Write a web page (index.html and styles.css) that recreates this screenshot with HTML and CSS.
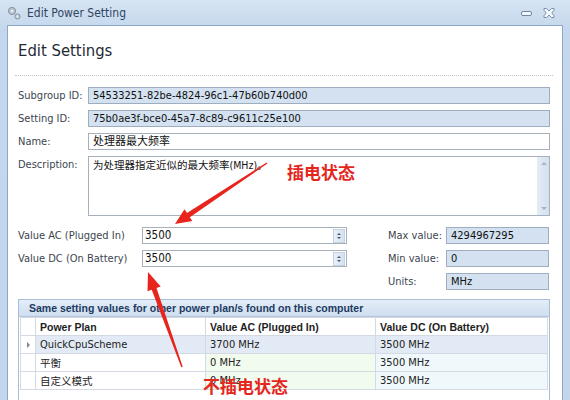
FILE: index.html
```html
<!DOCTYPE html>
<html>
<head>
<meta charset="utf-8">
<link rel="stylesheet" href="styles.css">
</head>
<body>
<div class="window">
  <div class="titlebar">
    <svg class="app-icon" width="14" height="14" viewBox="0 0 14 14">
      <circle cx="5" cy="5" r="3.6" fill="#b9c3cf" stroke="#8793a3" stroke-width="1"/>
      <circle cx="5" cy="5" r="1.3" fill="#eef2f6"/>
      <circle cx="10.5" cy="10.5" r="2.6" fill="#c3ccd7" stroke="#8793a3" stroke-width="1"/>
      <circle cx="10.5" cy="10.5" r="0.9" fill="#eef2f6"/>
    </svg>
    <span class="title">Edit Power Setting</span>
    <span class="spacer"></span>
    <svg class="tb-btn" width="14" height="10" viewBox="0 0 14 10">
      <rect x="1.5" y="3.5" width="10" height="4" rx="1.5" fill="#f4f7fb" stroke="#6f86a3"/>
    </svg>
    <svg class="tb-btn close" width="14" height="12" viewBox="0 0 14 12">
      <path d="M2 1.5h2.5L7 4l2.5-2.5H12v1.8L9.8 6 12 8.7v1.8H9.5L7 8l-2.5 2.5H2V8.7L4.2 6 2 3.3z" fill="#f4f7fb" stroke="#6f86a3" stroke-width="0.9"/>
    </svg>
  </div>
  <div class="panel">
    <h1 class="heading">Edit Settings</h1>
    <div class="divider"></div>

    <div class="fields">
      <label class="lbl">Subgroup ID:</label>
      <div class="box ro">54533251-82be-4824-96c1-47b60b740d00</div>
      <label class="lbl">Setting ID:</label>
      <div class="box ro">75b0ae3f-bce0-45a7-8c89-c9611c25e100</div>
      <label class="lbl">Name:</label>
      <div class="box">处理器最大频率</div>
      <label class="lbl top">Description:</label>
      <div class="box memo">
        <span class="memo-text">为处理器指定近似的最大频率(MHz)。</span>
        <div class="vscroll"><span class="sc-up"></span><span class="sc-down"></span></div>
      </div>
    </div>

    <div class="values">
      <label class="lbl llbl">Value AC (Plugged In)</label>
      <div class="box spin"><span>3500</span><span class="spinner"><i class="up"></i><i class="down"></i></span></div>
      <label class="lbl rlbl">Max value:</label>
      <div class="box ro">4294967295</div>

      <label class="lbl llbl">Value DC (On Battery)</label>
      <div class="box spin"><span>3500</span><span class="spinner"><i class="up"></i><i class="down"></i></span></div>
      <label class="lbl rlbl">Min value:</label>
      <div class="box ro">0</div>

      <label class="lbl rlbl">Units:</label>
      <div class="box ro">MHz</div>
    </div>

    <div class="group">
      <div class="group-head">Same setting values for other power plan/s found on this computer</div>
      <table class="grid">
        <colgroup><col class="c0"><col class="c1"><col class="c2"><col class="c3"></colgroup>
        <tr class="hdr"><th></th><th>Power Plan</th><th>Value AC (Plugged In)</th><th>Value DC (On Battery)</th></tr>
        <tr class="sel"><td class="rh"><span class="tri"></span></td><td>QuickCpuScheme</td><td>3700 MHz</td><td>3500 MHz</td></tr>
        <tr><td class="rh"></td><td class="cjk">平衡</td><td class="ac">0 MHz</td><td class="dc">3500 MHz</td></tr>
        <tr><td class="rh"></td><td class="cjk">自定义模式</td><td class="ac">0 MHz</td><td class="dc">3500 MHz</td></tr>
      </table>
    </div>
  </div>
</div>

<svg class="annot-arrows" width="570" height="400" viewBox="0 0 570 400">
  <polygon fill="#e8251d" points="267.4,163.5 189.8,217.2 192.3,220.9 175,224 184.5,209.3 187,213 266.6,162.5"/>
  <polygon fill="#e8251d" points="182.7,366.8 156.5,288.1 160.7,286.5 148,272 147.5,291.3 151.7,289.7 181.3,367.2"/>
</svg>
<div class="annot a1">插电状态</div>
<div class="annot a2">不插电状态</div>
</body>
</html>
```

FILE: styles.css
```css
* { box-sizing: border-box; }
html, body { margin: 0; padding: 0; }
body {
  width: 570px;
  height: 400px;
  overflow: hidden;
  background: #c6d9ee;
  font-family: "DejaVu Sans Condensed", "Liberation Sans", "Noto Sans CJK SC", sans-serif;
  font-size: 11px;
  color: #222;
  position: relative;
}
.window {
  height: 400px;
  display: flex;
  flex-direction: column;
  background: linear-gradient(#d6e4f3, #c4d7ed 30px, #c2d6ec);
}
.titlebar {
  height: 25px;
  display: flex;
  align-items: center;
  padding: 0 14px 0 7px;
  flex: none;
}
.app-icon { margin-right: 6px; margin-top: 1px; }
.title {
  font-size: 12px;
  color: #30455f;
}
.spacer { flex: 1; }
.tb-btn { margin-left: 9px; }
.tb-btn.close { margin-left: 8px; margin-right: 0; }

.panel {
  flex: 1;
  margin: 0 7px 0 7px;
  background: #fff;
  border: 1px solid #8ea7c5;
  border-bottom: none;
  padding: 0 12px 0 10px;
}
.heading {
  margin: 13px 0 0 0;
  font-size: 16.5px;
  line-height: 24px;
  font-weight: normal;
  color: #1f2a36;
  height: 24px;
}
.divider {
  margin: 12px -3px 0 -3px;
  border-top: 1px dotted #c4c4c4;
  height: 0;
}

.lbl {
  color: #3c4550;
  white-space: nowrap;
  align-self: center;
}
.lbl.top { align-self: start; padding-top: 2px; }

.box {
  height: 17px;
  border: 1px solid #a7b1bd;
  background: #fff;
  padding: 0 4px;
  line-height: 15px;
  color: #111;
  white-space: nowrap;
  overflow: hidden;
}
.box.ro {
  background: #d3e1f0;
  border-color: #9eaebf;
}

.fields {
  margin-top: 11px;
  display: grid;
  grid-template-columns: 70px 1fr;
  row-gap: 6px;
}
.box.memo {
  height: 60px;
  display: flex;
  padding: 0 0 0 4px;
  align-items: flex-start;
}
.memo-text { flex: 1; line-height: 16px; font-size: 10.5px; }
.vscroll {
  width: 12px;
  height: 100%;
  background: linear-gradient(90deg, #e4ecf6, #d3e0ee);
  border-left: 1px solid #e5ebf2;
  display: flex;
  flex-direction: column;
  justify-content: space-between;
  align-items: center;
  padding: 5px 0 5px;
}
.sc-up, .sc-down {
  width: 0; height: 0;
  border-left: 3px solid transparent;
  border-right: 3px solid transparent;
}
.sc-up { border-bottom: 3px solid #a8b4c2; }
.sc-down { border-top: 3px solid #a8b4c2; }

.values {
  margin-top: 11px;
  display: grid;
  grid-template-columns: 124px 205px 41px 58px 103px;
  grid-template-rows: 17px 17px 17px;
  row-gap: 6px;
}
.values .llbl { grid-column: 1; }
.values .rlbl { grid-column: 4; }
.values .box.spin {
  display: flex;
  align-items: center;
  padding: 0 1px 0 2px;
  font-size: 11.5px;
}
.box.spin span:first-child { flex: 1; }
.spinner {
  width: 12px;
  height: 14px;
  background: linear-gradient(90deg, #e9f0f8, #d4e1ef);
  border: 1px solid #c3d1e0;
  display: flex;
  flex-direction: column;
  align-items: center;
  justify-content: center;
  gap: 2px;
}
.spinner i {
  display: block;
  width: 0; height: 0;
  border-left: 2px solid transparent;
  border-right: 2px solid transparent;
}
.spinner .up { border-bottom: 2px solid #4b5a6c; }
.spinner .down { border-top: 2px solid #4b5a6c; }

.group {
  margin-top: 9px;
  border: 1px solid #a9bdd5;
  border-bottom: none;
  height: 120px;
  padding: 0 1px;
}
.group-head {
  height: 17px;
  margin: 0 -1px;
  padding-left: 10px;
  line-height: 16px;
  font-family: "Liberation Sans", "Noto Sans CJK SC", sans-serif;
  font-size: 10.5px;
  font-weight: bold;
  color: #1d3a62;
  background: linear-gradient(#e4edf8, #cfdeef);
  border-bottom: 1px solid #b1c4da;
  white-space: nowrap;
}
.grid {
  border-collapse: collapse;
  table-layout: fixed;
  width: 527px;
  border: 1px solid #c7d0db;
  border-top: none;
}
.c0 { width: 15px; }
.c1 { width: 170px; }
.c2 { width: 170px; }
.c3 { width: 172px; }
.grid th, .grid td {
  height: 18px;
  padding: 0 4px;
  border: 1px solid #d3dae3;
  text-align: left;
  white-space: nowrap;
  overflow: hidden;
  font-weight: normal;
  color: #222;
}
.grid th {
  font-family: "Liberation Sans", "Noto Sans CJK SC", sans-serif;
  font-size: 10.5px;
  font-weight: bold;
  background: #fff;
  color: #1e1e1e;
}
.grid td.cjk { font-size: 10.5px; }
.grid tr.sel td { background: #e2eaf5; }
.grid tr.sel td.rh { background: #fff; }
.grid td.ac { background: #f1fbee; }
.grid td.dc { background: #eff9fb; }
.grid td.rh { padding: 0; text-align: center; background: #fff; }
.tri {
  display: inline-block;
  width: 0; height: 0;
  border-top: 3px solid transparent;
  border-bottom: 3px solid transparent;
  border-left: 3px solid #7e8893;
}

.annot-arrows {
  position: absolute;
  left: 0; top: 0;
}
.annot {
  position: absolute;
  font-family: "Noto Sans CJK SC", sans-serif;
  font-weight: bold;
  font-size: 17px;
  line-height: 20px;
  color: #e4261d;
  white-space: nowrap;
}
.a1 { left: 287px; top: 162px; }
.a2 { left: 203px; top: 376px; }
```
